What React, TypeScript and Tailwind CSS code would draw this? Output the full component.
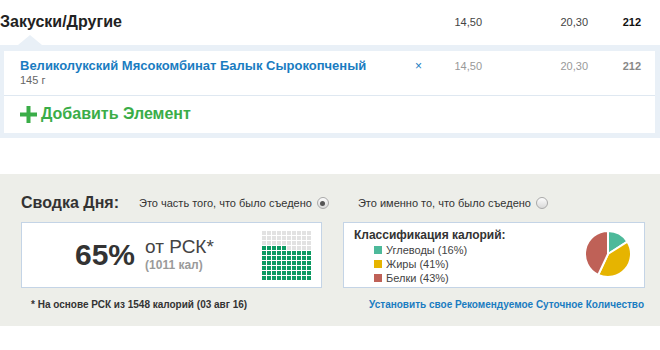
import React from 'react';

const font = "font-['Liberation_Sans',Arial,sans-serif]";

const eaten = 65;

function Radio({ checked }: { checked?: boolean }) {
  return (
    <span className="flex h-[12px] w-[12px] items-center justify-center rounded-full border border-[#a9a9a9] bg-gradient-to-b from-[#fdfdfd] to-[#d9d9d9]">
      {checked && <span className="h-[5px] w-[5px] rounded-full bg-[#555]" />}
    </span>
  );
}

function PlusIcon() {
  return (
    <svg width="17" height="17" viewBox="0 0 17 17" aria-hidden="true">
      <rect x="6.5" y="0" width="4" height="17" fill="#3aad48" />
      <rect x="0" y="6.5" width="17" height="4" fill="#3aad48" />
    </svg>
  );
}

function Pie() {
  return (
    <svg width="50" height="50" viewBox="0 0 50 50" aria-hidden="true">
      <path d="M25,25 L25,2 A23,23 0 0 1 44.42,12.68 Z" fill="#4db99a" stroke="#fff" strokeWidth="2" />
      <path d="M25,25 L44.42,12.68 A23,23 0 0 1 15.21,45.81 Z" fill="#e6b400" stroke="#fff" strokeWidth="2" />
      <path d="M25,25 L15.21,45.81 A23,23 0 0 1 25,2 Z" fill="#bf6157" stroke="#fff" strokeWidth="2" />
    </svg>
  );
}

function CellGrid() {
  const full = Math.floor(eaten / 10);
  const cells = Array.from({ length: 100 }, (_, i) => {
    const rowFromBottom = 9 - Math.floor(i / 10);
    const col = i % 10;
    // bottom rows fill first, partial row fills from the left
    const filled = rowFromBottom < full || (rowFromBottom === full && col < eaten % 10);
    return { key: i, filled };
  });
  return (
    <div className="grid grid-cols-[repeat(10,4px)] gap-[1px]">
      {cells.map((c) => (
        <span key={c.key} className={c.filled ? 'h-[4px] w-[4px] bg-[#0b9a62]' : 'h-[4px] w-[4px] bg-[#e2e2e2]'} />
      ))}
    </div>
  );
}

const legend = [
  { label: 'Углеводы (16%)', color: 'bg-[#4db99a]' },
  { label: 'Жиры (41%)', color: 'bg-[#e6b400]' },
  { label: 'Белки (43%)', color: 'bg-[#bf6157]' },
];

export default function App() {
  return (
    <div className={`${font} h-[350px] w-[660px] bg-white text-[#333]`}>
      {/* meal header */}
      <div className="flex h-[45px] items-center pr-[19px]">
        <h2 className="flex-1 pb-[2px] text-[16px] font-bold text-[#222]">Закуски/Другие</h2>
        <span className="w-[60px] text-right text-[11px] text-[#444]">14,50</span>
        <span className="w-[106px] text-right text-[11px] text-[#444]">20,30</span>
        <span className="w-[53px] text-right text-[11px] font-bold text-[#111]">212</span>
      </div>

      <div className="relative bg-[#e9f0f7] px-[5px] pb-[5px] pl-[4px] pt-[6px]">
        <span className="absolute left-[18px] top-[-10px] h-0 w-0 border-x-[12px] border-b-[10px] border-x-transparent border-b-[#e9f0f7]" />
        <div className="bg-white">
          <div className="flex h-[44px] items-start pr-[14px] pt-[7px]">
            <div className="flex-1 pl-[16px]">
              <a className="block text-[13px] font-bold leading-[16px] text-[#1a7cc1]">
                Великолукский Мясокомбинат Балык Сырокопченый
              </a>
              <span className="block text-[11px] leading-[13px] text-[#666]">145 г</span>
            </div>
            <span className="w-[14px] text-right text-[12px] leading-[16px] text-[#1a7cc1]">×</span>
            <span className="w-[60px] text-right text-[11px] leading-[16px] text-[#999]">14,50</span>
            <span className="w-[106px] text-right text-[11px] leading-[16px] text-[#999]">20,30</span>
            <span className="w-[53px] text-right text-[11px] font-bold leading-[16px] text-[#888]">212</span>
          </div>
          <div className="h-px bg-[#dfe8f1]" />
          <button type="button" className="flex h-[37px] items-center gap-[4px] pl-[16px] pb-[1px]">
            <PlusIcon />
            <span className="text-[16px] font-bold text-[#3aad48]">Добавить Элемент</span>
          </button>
        </div>
      </div>

      {/* day summary */}
      <div className="mt-[36px] h-[152px] bg-[#edeee9] pl-[21px] pr-[15px] pt-[19px]">
        <div className="flex h-[20px] items-center">
          <h3 className="w-[118px] text-[16px] font-bold text-[#333]">Сводка Дня:</h3>
          <label className="flex items-center gap-[5px] text-[11px] text-[#333]">
            Это часть того, что было съедено
            <Radio checked />
          </label>
          <label className="ml-[29px] flex items-center gap-[5px] text-[11px] text-[#333]">
            Это именно то, что было съедено
            <Radio />
          </label>
        </div>

        <div className="mt-[9px] flex gap-[21px]">
          <div className="flex h-[66px] w-[301px] items-center border border-[#c4d4e6] bg-white pl-[53px] pr-[10px]">
            <span className="text-[30px] font-bold leading-none text-[#333]">65%</span>
            <div className="ml-[10px] flex flex-col pb-[2px]">
              <span className="text-[19px] leading-[22px] text-[#444]">от РСК*</span>
              <span className="text-[12px] font-bold leading-[14px] text-[#9a9a9a]">(1011 кал)</span>
            </div>
            <div className="ml-auto pt-[1px]">
              <CellGrid />
            </div>
          </div>

          <div className="flex h-[66px] w-[302px] border border-[#c4d4e6] bg-white pl-[10px] pr-[11px]">
            <div className="flex-1 pt-[4px]">
              <div className="text-[12px] font-bold leading-[16px] text-[#333]">Классификация калорий:</div>
              <ul className="pl-[20px]">
                {legend.map((l) => (
                  <li key={l.label} className="flex h-[14px] items-center gap-[4px] text-[11px] text-[#444]">
                    <span className={`h-[8px] w-[8px] ${l.color}`} />
                    {l.label}
                  </li>
                ))}
              </ul>
            </div>
            <div className="flex items-center pb-[3px]">
              <Pie />
            </div>
          </div>
        </div>

        <div className="mt-[9px] flex items-center justify-between pl-[10px] pr-[1px]">
          <span className="text-[10px] font-bold text-[#333]">* На основе РСК из 1548 калорий (03 авг 16)</span>
          <a className="text-[10px] font-bold text-[#1a7cc1]">Установить свое Рекомендуемое Суточное Количество</a>
        </div>
      </div>
    </div>
  );
}
